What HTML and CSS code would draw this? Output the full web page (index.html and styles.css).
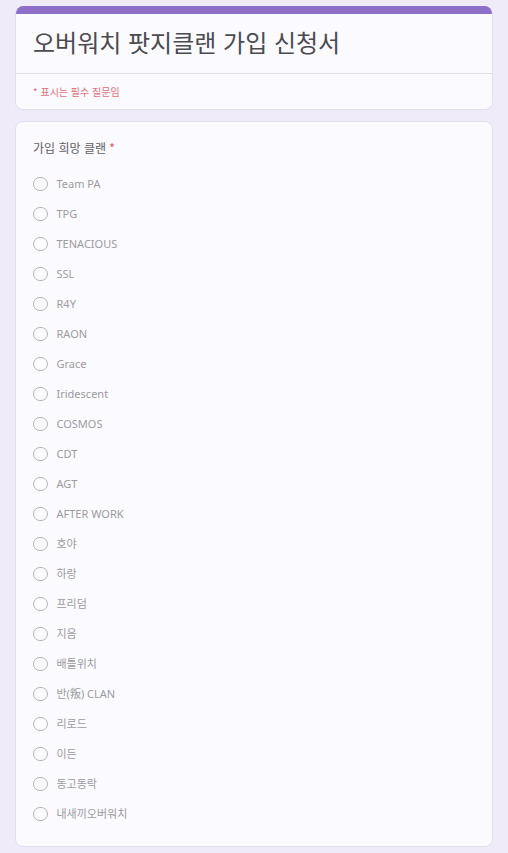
FILE: index.html
```html
<!DOCTYPE html>
<html lang="ko">
<head>
<meta charset="utf-8">
<title>오버워치 팟지클랜 가입 신청서</title>
<link rel="stylesheet" href="styles.css">
</head>
<body>
<div class="page">
  <div class="card header-card">
    <div class="accent"></div>
    <div class="title-block">
      <h1 class="title">오버워치 팟지클랜 가입 신청서</h1>
    </div>
    <div class="required-note">* 표시는 필수 질문임</div>
  </div>
  <div class="card question-card">
    <div class="question-label">가입 희망 클랜 <span class="star">*</span></div>
    <div class="options">
      <label class="option"><span class="radio"></span><span class="opt-text">Team PA</span></label>
      <label class="option"><span class="radio"></span><span class="opt-text">TPG</span></label>
      <label class="option"><span class="radio"></span><span class="opt-text">TENACIOUS</span></label>
      <label class="option"><span class="radio"></span><span class="opt-text">SSL</span></label>
      <label class="option"><span class="radio"></span><span class="opt-text">R4Y</span></label>
      <label class="option"><span class="radio"></span><span class="opt-text">RAON</span></label>
      <label class="option"><span class="radio"></span><span class="opt-text">Grace</span></label>
      <label class="option"><span class="radio"></span><span class="opt-text">Iridescent</span></label>
      <label class="option"><span class="radio"></span><span class="opt-text">COSMOS</span></label>
      <label class="option"><span class="radio"></span><span class="opt-text">CDT</span></label>
      <label class="option"><span class="radio"></span><span class="opt-text">AGT</span></label>
      <label class="option"><span class="radio"></span><span class="opt-text">AFTER WORK</span></label>
      <label class="option"><span class="radio"></span><span class="opt-text">호야</span></label>
      <label class="option"><span class="radio"></span><span class="opt-text">하랑</span></label>
      <label class="option"><span class="radio"></span><span class="opt-text">프리덤</span></label>
      <label class="option"><span class="radio"></span><span class="opt-text">지음</span></label>
      <label class="option"><span class="radio"></span><span class="opt-text">배틀위치</span></label>
      <label class="option"><span class="radio"></span><span class="opt-text">반(叛) CLAN</span></label>
      <label class="option"><span class="radio"></span><span class="opt-text">리로드</span></label>
      <label class="option"><span class="radio"></span><span class="opt-text">이든</span></label>
      <label class="option"><span class="radio"></span><span class="opt-text">동고동락</span></label>
      <label class="option"><span class="radio"></span><span class="opt-text">내새끼오버워치</span></label>
    </div>
  </div>
</div>
</body>
</html>
```
FILE: styles.css
```css
html, body {
  margin: 0;
  padding: 0;
  background: #efebf8;
}
body {
  font-family: "Noto Sans", "Noto Sans CJK KR", sans-serif;
}
.page {
  padding: 6px 15px 0 15px;
  display: flex;
  flex-direction: column;
  gap: 11px;
}
.card {
  background: #fbfaff;
  border: 1px solid #e2deec;
  border-radius: 8px;
  overflow: hidden;
}
.header-card {
  border-top: none;
}
.accent {
  height: 8px;
  background: #8d6fc8;
}
.title-block {
  height: 59px;
  display: flex;
  align-items: center;
  padding: 0 17px;
  border-bottom: 1px solid #e2deec;
}
.title {
  margin: 0;
  font-family: "Noto Sans CJK KR", sans-serif;
  font-weight: 400;
  font-size: 24px;
  line-height: 30px;
  color: #4a4a50;
  padding-bottom: 4px;
}
.required-note {
  height: 35px;
  display: flex;
  align-items: center;
  padding: 0 17px;
  font-family: "Noto Sans CJK KR", sans-serif;
  font-size: 10px;
  color: #e0707a;
}
.question-card {
  padding: 17px 17px 17px 17px;
}
.question-label {
  font-family: "Noto Sans CJK KR", sans-serif;
  font-size: 12px;
  line-height: 18px;
  color: #5f5f66;
  margin-bottom: 12px;
}
.star {
  color: #e05a5a;
}
.options {
  display: flex;
  flex-direction: column;
}
.option {
  height: 30px;
  display: flex;
  align-items: center;
  gap: 9px;
}
.radio {
  width: 12.5px;
  height: 12.5px;
  border: 1.3px solid #b5b4ba;
  border-radius: 50%;
  flex: none;
}
.opt-text {
  font-size: 11px;
  color: #9b9aa0;
  line-height: 16px;
}
```
